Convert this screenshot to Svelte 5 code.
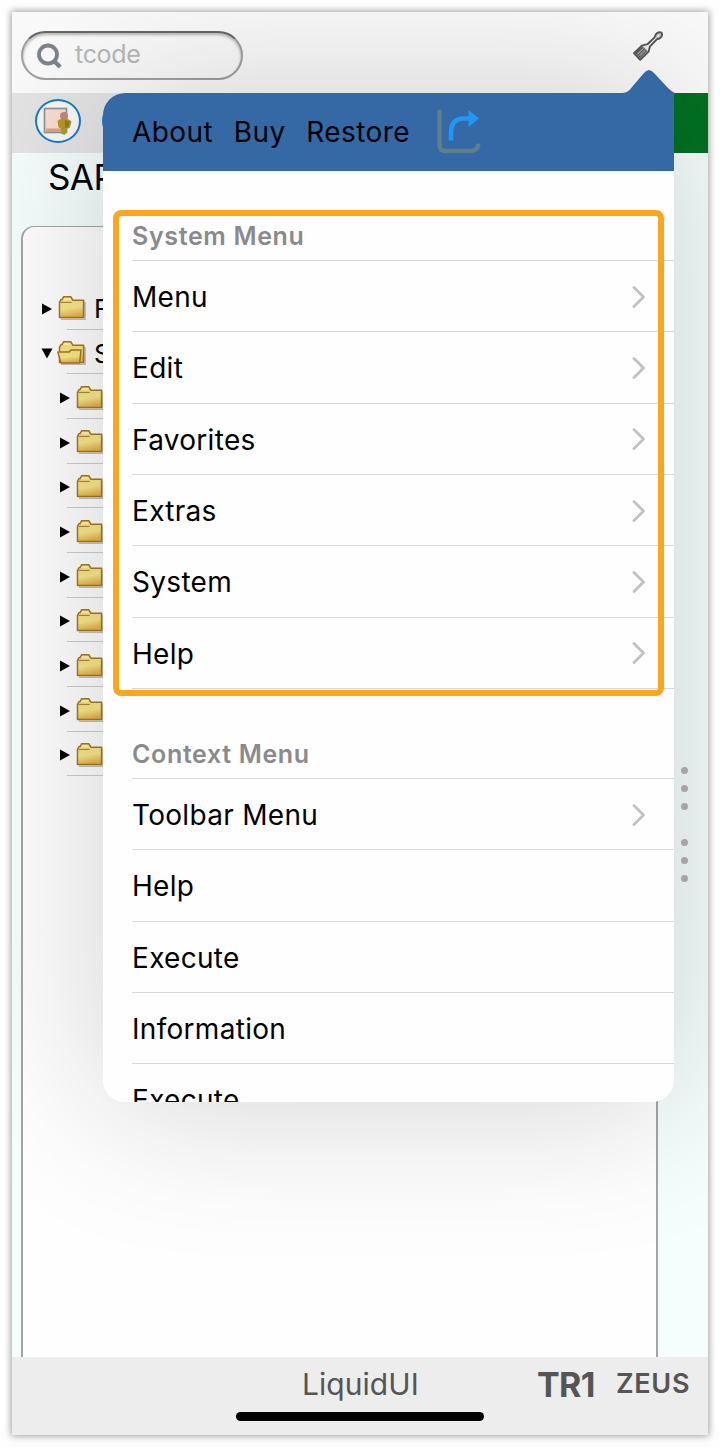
<script lang="ts">
  type MenuItem = { label: string; submenu?: boolean };

  const actions = ['About', 'Buy', 'Restore'];

  const systemMenu: MenuItem[] = [
    { label: 'Menu', submenu: true },
    { label: 'Edit', submenu: true },
    { label: 'Favorites', submenu: true },
    { label: 'Extras', submenu: true },
    { label: 'System', submenu: true },
    { label: 'Help', submenu: true },
  ];

  const contextMenu: MenuItem[] = [
    { label: 'Toolbar Menu', submenu: true },
    { label: 'Help' },
    { label: 'Execute' },
    { label: 'Information' },
    { label: 'Execute' },
  ];

  const sections = [
    { title: 'System Menu', items: systemMenu },
    { title: 'Context Menu', items: contextMenu },
  ];

  const tree = [
    { label: 'F', open: false, child: false },
    { label: 'S', open: true, child: false },
    ...Array.from({ length: 9 }, () => ({ label: '', open: false, child: true })),
  ];
</script>

<div class="screen">
  <header class="topbar">
    <label class="search">
      <svg width="26" height="26" viewBox="0 0 26 26">
        <circle cx="11" cy="11.5" r="9" fill="none" stroke="#7b858b" stroke-width="3.8" />
        <path d="M17 18l6.2 6" stroke="#7b858b" stroke-width="4.2" />
      </svg>
      <span>tcode</span>
    </label>
    <svg class="brush" width="32" height="32" viewBox="0 0 32 32">
      <path
        d="M2 22.2L9.8 14.6L15.4 13.2L22.6 6.4C22.8 2.8 26.8 0.2 29.4 1.6C31.4 4.4 28.6 8 24.8 8.3L18 15.3L16.6 20.6L8.2 28.8Z"
        fill="#ececec" stroke="#555" stroke-width="1.9" stroke-linejoin="round" />
      <path d="M3.4 22.3L10.6 15.5L16 20.6L8.2 27.7Z" fill="#777" />
      <path d="M5.3 24.1L12.5 17.2M7 26L14.2 19.2M3.5 22.5L10.8 15.7" stroke="#444" stroke-width="1" />
      <path d="M6 22.8L11.4 17.7M7.8 24.7L13.4 19.4" stroke="#ddd" stroke-width=".7" />
      <ellipse cx="26.4" cy="4.7" rx="2.2" ry="1.2" transform="rotate(-45 26.4 4.7)" fill="#fff" stroke="#777" stroke-width=".6" />
    </svg>
  </header>

  <div class="toolbar">
    <div class="round">
      <svg width="30" height="28" viewBox="0 0 30 28">
        <rect x="1.5" y="1.5" width="22" height="24" fill="#f8ddd0" stroke="#929496" stroke-width="1.7" />
        <path d="M3 21.5h18V25H3z" fill="#dfa184" />
        <circle cx="21" cy="9" r="4" fill="#c48783" />
        <path d="M14.5 14q2-2.5 6.5-2.5t7.5 3l-1.8 6.5-3.2.8-1.5 6.2-3.5-1-.5-5-2.5-2z" fill="#b89820" />
        <path d="M22 13l5 1.8-2 5.5-3 1z" fill="#8e7d28" />
      </svg>
    </div>
    <div class="round next"></div>
    <div class="green"></div>
  </div>

  <main class="content">
    <h1>SAP</h1>
    <div class="panel">
      {#each tree as node}
        <div class="node" class:child={node.child}>
          {#if node.open}
            <svg class="caret" width="12" height="12" viewBox="0 0 12 12"><path d="M.5 1.5h11L6 11.5z" fill="#000" /></svg>
          {:else}
            <svg class="caret" width="12" height="12" viewBox="0 0 12 12"><path d="M1 .5L11 6 1 11.5z" fill="#000" /></svg>
          {/if}
          <svg class="folder" width="30" height="26" viewBox="0 0 30 26">
            <defs>
              <linearGradient id="gold" x1="0" y1="0" x2=".2" y2="1">
                <stop offset="0" stop-color="#f6e27a" />
                <stop offset=".6" stop-color="#f9e88e" />
                <stop offset="1" stop-color="#e8b548" />
              </linearGradient>
            </defs>
            <path d="M4 24.2h24V7" fill="none" stroke="#777" stroke-opacity=".45" stroke-width="1.6" />
            <path d="M2.5 7.4L4 4.6h1.400L6.5 1.800h7.4l1.900 3.400h10.800v17.400H2.500z" fill="url(#gold)" stroke="#a87820" stroke-width="1.5" stroke-linejoin="round" />
            <path d="M5.7 4.900l1.600-1.800h5.600l1.200 2.100H8z" fill="#fff4b0" />
            {#if node.open}
              <path d="M.9 12.1h11l2-2H24l-1.400 12.800H4z" fill="url(#gold)" stroke="#a87820" stroke-width="1.5" stroke-linejoin="round" />
            {:else}
              <path d="M3.600 7.400h11" stroke="#a97d25" stroke-width="1" />
            {/if}
          </svg>
          <span class="node-label">{node.label}</span>
        </div>
      {/each}
    </div>
    <div class="handles">
      <i></i><i></i><i></i>
      <i class="gap"></i><i></i><i></i>
    </div>
  </main>

  <footer class="status">
    <span class="app-name">LiquidUI</span>
    <span class="system">TR1</span>
    <span class="server">ZEUS</span>
    <div class="home-indicator"></div>
  </footer>

  <div class="popover">
    <svg class="arrow" width="53" height="25" viewBox="0 0 53 25">
      <path d="M0 24Q4.500 24 7.500 21L21.500 4.500Q27 -2.600 32.500 4.500L46 19Q49.500 22.800 53 24v1H0z" fill="#3469a5" />
    </svg>
    <div class="sheet">
      <nav>
        {#each actions as action}
          <span>{action}</span>
        {/each}
        <svg class="share" width="46" height="46" viewBox="0 0 46 46">
          <path d="M3.500 1v34.500Q3.500 42 9 42H35Q41.500 42 42.500 34.500" fill="none" stroke="#607f89" stroke-width="4.400" />
          <path d="M15 31.500V24Q15 9.500 28 9.500H34" fill="none" stroke="#2196f3" stroke-width="4.600" />
          <path d="M32.500 1L43 9.500L32.500 18z" fill="#2196f3" />
        </svg>
      </nav>
      {#each sections as section}
        <section>
          <h2>{section.title}</h2>
          {#each section.items as item}
            <div class="item">
              <span>{item.label}</span>
              {#if item.submenu}
                <svg width="14" height="24" viewBox="0 0 14 24">
                  <path d="M2 2.500L11.500 12L2 21.500" fill="none" stroke="#c2c2c4" stroke-width="2.900" stroke-linecap="round" stroke-linejoin="round" />
                </svg>
              {/if}
            </div>
          {/each}
        </section>
      {/each}
    </div>
    <div class="highlight"></div>
  </div>
</div>

<style>
  :global(body) {
    background: #fefefe;
  }

  .screen {
    position: relative;
    display: flex;
    flex-direction: column;
    width: 696px;
    height: 1423px;
    margin: 12px;
    background: #fff;
    font-family: Inter, 'Liberation Sans', sans-serif;
    color: #000;
    box-shadow: 0 0 7px 1px rgba(0, 0, 0, 0.38);
    overflow: hidden;
  }

  .topbar {
    display: flex;
    flex: none;
    box-sizing: border-box;
    height: 81px;
    padding: 19px 44px 0 9px;
    justify-content: space-between;
    background: #fafafa;
  }

  .search {
    display: flex;
    box-sizing: border-box;
    width: 222px;
    height: 49px;
    padding-left: 14px;
    align-items: center;
    border: 2px solid #a0a0a0;
    border-top-color: #666;
    border-radius: 25px;
    box-shadow: inset 0 2px 3px rgba(0, 0, 0, 0.28);
  }

  .search span {
    margin: -3px 0 0 12px;
    font-size: 25px;
    letter-spacing: -0.3px;
    color: #b8b8b8;
  }

  .toolbar {
    display: flex;
    flex: none;
    height: 60px;
    align-items: center;
    background: #e4e4e4;
  }

  .round {
    display: flex;
    box-sizing: border-box;
    width: 46px;
    height: 44px;
    margin: -5px 0 0 23px;
    align-items: center;
    justify-content: center;
    border: 2.5px solid #147bc9;
    border-radius: 50%;
    background: #f8f8f8;
  }

  .next {
    margin-left: 21px;
  }

  .green {
    width: 60px;
    height: 60px;
    margin-left: auto;
    background: #007123;
  }

  .content {
    display: grid;
    flex: 1;
    grid-template: 73px 1fr / 649px 1fr;
    background: #f5fdfd;
    overflow: hidden;
  }

  h1 {
    grid-column: 1 / 3;
    margin: 3px 0 0 36px;
    font-size: 35px;
    font-weight: 400;
    line-height: 42px;
    letter-spacing: -0.6px;
  }

  .panel {
    box-sizing: border-box;
    width: 637px;
    height: 1160px;
    margin-left: 9px;
    padding: 58px 0 0 18px;
    border: 2px solid #a5a5a5;
    border-top-width: 1px;
    border-radius: 13px;
    background: #fefefe;
  }

  .node {
    display: flex;
    box-sizing: border-box;
    height: 44.67px;
    width: 300px;
    padding-top: 3px;
    align-items: center;
    background: linear-gradient(#cfcfcf, #cfcfcf) 26px bottom / 100% 1px no-repeat;
  }

  .child .caret {
    margin-left: 18px;
  }

  .folder {
    margin: -1px 0 0 4px;
  }

  .node-label {
    margin: 0 0 0 7px;
    font-size: 26px;
  }

  .handles {
    display: flex;
    flex-direction: column;
    width: 7px;
    margin: 541px 0 0 20px;
    gap: 11px;
  }

  .handles i {
    width: 7px;
    height: 7px;
    border-radius: 50%;
    background: #b4b4b4;
  }

  .handles .gap {
    margin-top: 18px;
  }

  .status {
    display: grid;
    flex: none;
    box-sizing: border-box;
    height: 78px;
    padding: 8px 12px 0 290px;
    grid-template: 38px 1fr / 235px 79px 1fr;
    align-items: center;
    background: #ededed;
    color: #555;
  }

  .app-name {
    font-size: 30px;
    letter-spacing: 0.05px;
  }

  .system {
    font-size: 34px;
    font-weight: 700;
    letter-spacing: -0.6px;
  }

  .server {
    margin-top: -1px;
    font-size: 27px;
    font-weight: 600;
    letter-spacing: 0.7px;
  }

  .home-indicator {
    grid-column: 1 / 4;
    align-self: start;
    width: 248px;
    height: 9px;
    margin: 9px 0 0 -66px;
    border-radius: 5px;
    background: #000;
  }

  .popover {
    position: absolute;
    top: 81px;
    left: 91px;
    width: 571px;
    height: 1009px;
    border-radius: 22px 0 22px 22px;
    box-shadow: 0 0 160px rgba(0, 0, 0, 0.18);
  }

  .arrow {
    position: absolute;
    top: -24px;
    right: -1px;
  }

  .sheet {
    height: 100%;
    border-radius: inherit;
    background: #fefefe;
    overflow: hidden;
  }

  nav {
    display: flex;
    height: 78px;
    padding-left: 29px;
    align-items: center;
    background: #3469a5;
    font-size: 28px;
    letter-spacing: 0.45px;
  }

  nav span {
    margin-right: 20.5px;
  }

  .share {
    margin-left: 5px;
  }

  h2 {
    box-sizing: border-box;
    height: 90px;
    margin: 0 0 0 29px;
    padding-top: 49px;
    border-bottom: 1px solid #d9d9da;
    font-size: 25px;
    font-weight: 600;
    line-height: 32px;
    letter-spacing: 0.65px;
    color: #8a8a8e;
  }

  .item {
    display: flex;
    box-sizing: border-box;
    height: 71.33px;
    margin-left: 29px;
    padding: 2px 28px 0 0;
    align-items: center;
    justify-content: space-between;
    border-bottom: 1px solid #d9d9da;
    font-size: 28px;
    letter-spacing: 0.3px;
  }

  .item svg {
    margin-top: -1px;
  }

  .highlight {
    position: absolute;
    box-sizing: border-box;
    top: 117px;
    left: 10px;
    width: 551px;
    height: 486px;
    border: 6px solid #fba61f;
    border-radius: 8px;
  }
</style>
